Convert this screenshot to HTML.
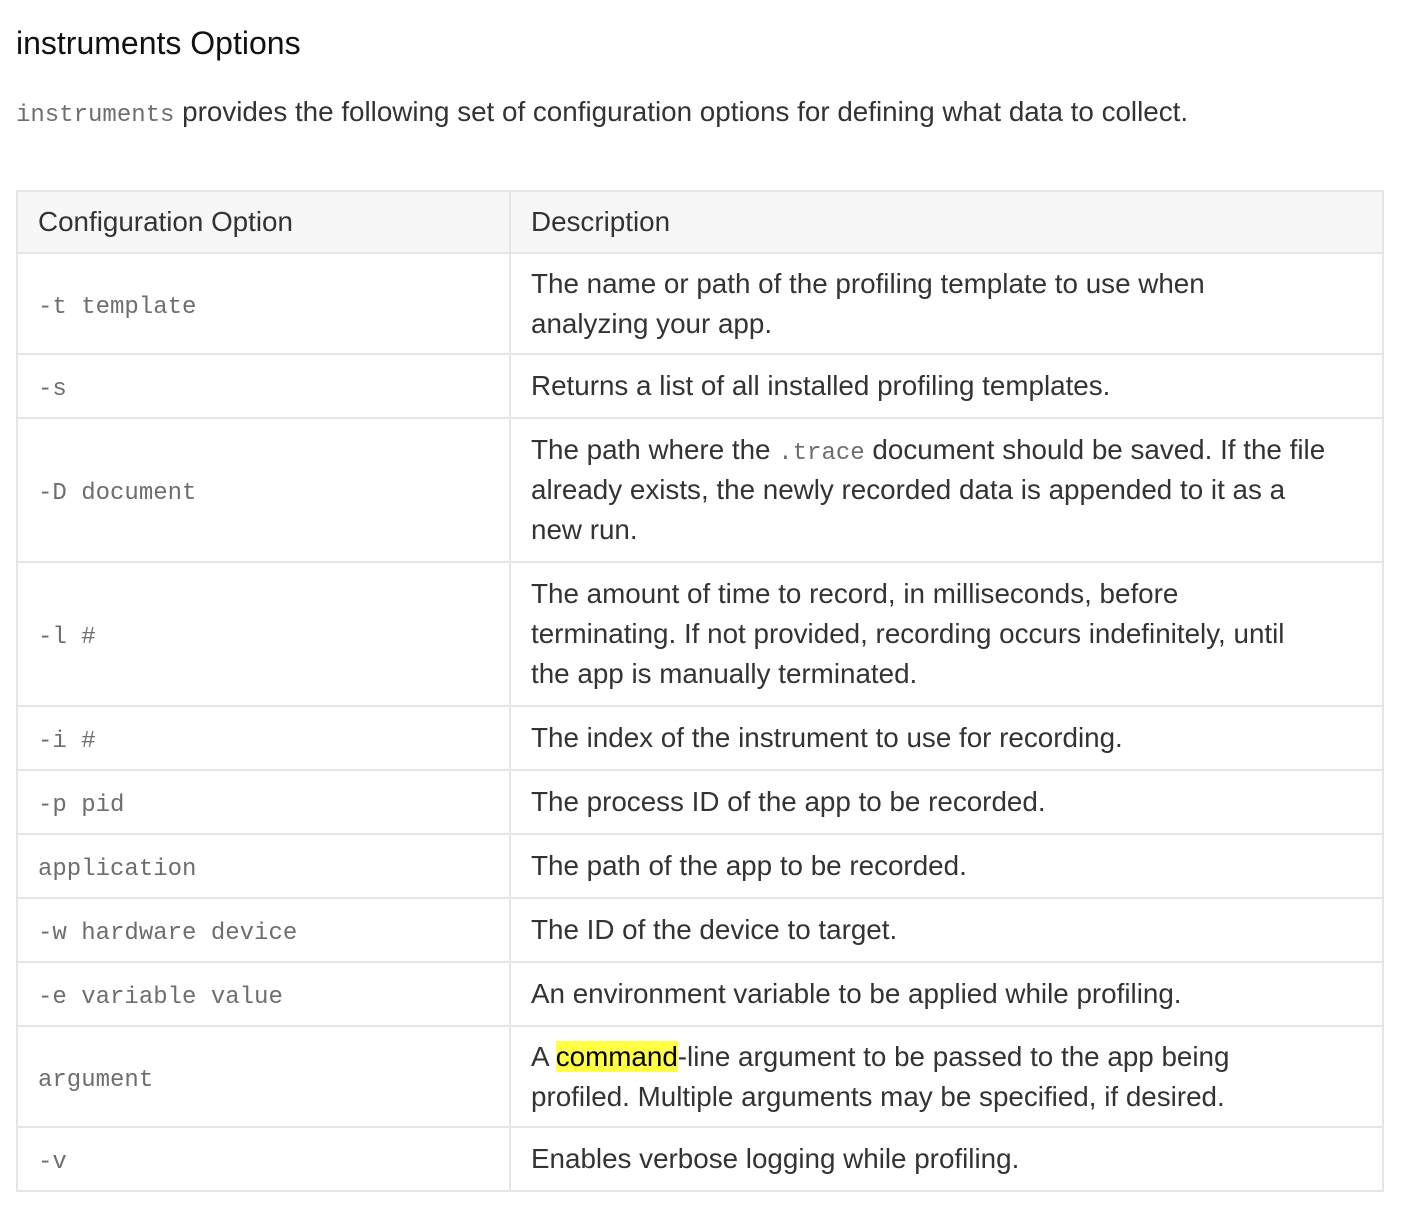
<!DOCTYPE html>
<html><head><meta charset="utf-8"><style>
body{margin:0;background:#fff;font-family:"Liberation Sans",Arial,sans-serif;color:#333;}
h2{position:absolute;left:16px;top:23px;margin:0;font-weight:normal;font-size:32px;color:#111;line-height:40px;}
p{position:absolute;left:16px;top:92px;margin:0;font-size:27.8px;line-height:40px;color:#333;}
code{font-family:"Liberation Mono","DejaVu Sans Mono",monospace;font-size:24px;line-height:1;color:#6e6e6e;}
table{position:absolute;left:16px;top:190px;width:1368px;border-collapse:collapse;}
td,th{border:2px solid #e6e6e6;padding:11px 20px;font-size:27.8px;line-height:40px;text-align:left;vertical-align:middle;color:#333;font-weight:normal;}
th{background:#f7f7f7;padding:10px 20px;}
tr.two td{padding:10px 20px 9px;}
td:first-child,th:first-child{width:451px;}
mark{background:#ffff44;color:#000;}
</style></head><body>
<h2>instruments Options</h2>
<p><code>instruments</code> provides the following set of configuration options for defining what data to collect.</p>
<table>
<tr><th>Configuration Option</th><th>Description</th></tr>
<tr class="two"><td><code>-t template</code></td><td>The name or path of the profiling template to use when<br>analyzing your app.</td></tr>
<tr><td><code>-s</code></td><td>Returns a list of all installed profiling templates.</td></tr>
<tr><td><code>-D document</code></td><td>The path where the <code>.trace</code> document should be saved. If the file<br>already exists, the newly recorded data is appended to it as a<br>new run.</td></tr>
<tr><td><code>-l #</code></td><td>The amount of time to record, in milliseconds, before<br>terminating. If not provided, recording occurs indefinitely, until<br>the app is manually terminated.</td></tr>
<tr><td><code>-i #</code></td><td>The index of the instrument to use for recording.</td></tr>
<tr><td><code>-p pid</code></td><td>The process ID of the app to be recorded.</td></tr>
<tr><td><code>application</code></td><td>The path of the app to be recorded.</td></tr>
<tr><td><code>-w hardware device</code></td><td>The ID of the device to target.</td></tr>
<tr><td><code>-e variable value</code></td><td>An environment variable to be applied while profiling.</td></tr>
<tr class="two"><td><code>argument</code></td><td>A <mark>command</mark>-line argument to be passed to the app being<br>profiled. Multiple arguments may be specified, if desired.</td></tr>
<tr><td><code>-v</code></td><td>Enables verbose logging while profiling.</td></tr>
</table>
</body></html>
